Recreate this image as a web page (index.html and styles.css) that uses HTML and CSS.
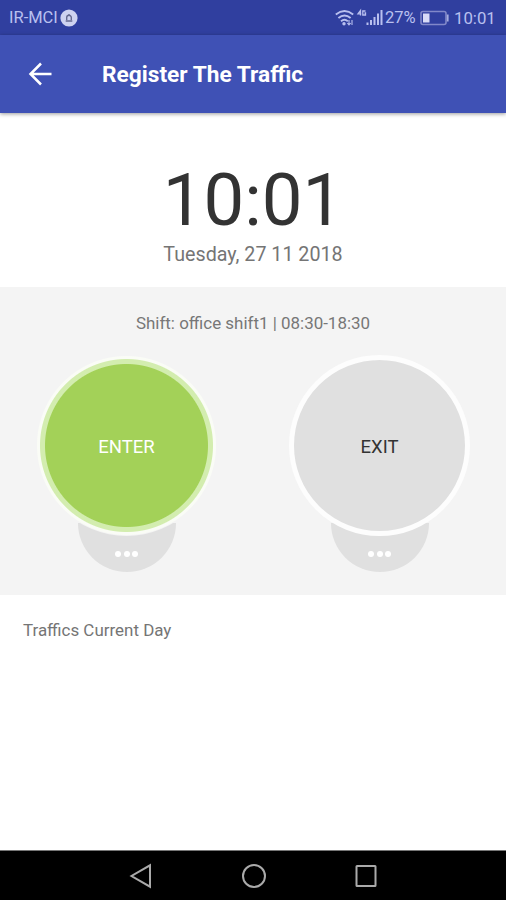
FILE: index.html
```html
<!DOCTYPE html>
<html lang="en">
<head>
<meta charset="utf-8">
<title>Register The Traffic</title>
<link rel="stylesheet" href="styles.css">
</head>
<body>
<header class="status">
  <span class="carrier">IR-MCI</span>
  <svg class="badge" width="18" height="18" viewBox="0 0 18 18"><circle cx="9" cy="9" r="8.6" fill="#ced2f0"/><path d="M5.7 12h6.6M6.7 11V8.6a2.3 2.3 0 0 1 4.6 0V11M9 6.2V5" fill="none" stroke="#65698f" stroke-width="1.4"/></svg>
  <svg class="signals" width="49" height="20" viewBox="0 0 49 20">
    <g fill="none" stroke="#b9c0ef" stroke-width="1.900"><path d="M.8 6.500Q9.500-.4 18.200 6.500M3.400 10Q9.500 4.800 15.600 10M6 13.200Q9.500 10.400 12.800 13.200"/></g>
    <circle cx="9" cy="15.700" r="1.700" fill="#b9c0ef"/><path d="M14 12v5M12.300 15l1.700 2 1.700-2M17 17v-5" stroke="#b9c0ef" stroke-width="1.100" fill="none"/>
    <path d="M25.500 7.500V2.500l-2.500 3.300h3.300M30.500 3h-2.700v4h2.700V5h-1" fill="none" stroke="#b9c0ef" stroke-width="1.300"/>
    <path d="M31.500 14.500h2V17h-2zM35 12h2v5h-2zM38.500 9h2v8h-2zM42 5.500h2V17h-2zM45.500 2h2v15h-2z" fill="#b9c0ef"/>
  </svg>
  <span class="percent">27%</span>
  <svg class="battery" width="29" height="16" viewBox="0 0 29 16"><rect x="1" y="1.500" width="25" height="13" rx="2" fill="none" stroke="#8188c9" stroke-width="1.600"/><path d="M3 3.500h6.500v9H3z" fill="#d8dbf7"/><path d="M27.700 4.500v7" stroke="#a6addf" stroke-width="1.800"/></svg>
  <span class="clock">10:01</span>
</header>
<nav class="bar">
  <svg class="back" width="24" height="24" viewBox="0 0 24 24"><path d="M13 1.500 2.500 12 13 22.500M2.500 12H23.500" fill="none" stroke="#fff" stroke-width="2.500"/></svg>
  <h1 class="title">Register The Traffic</h1>
</nav>
<main>
  <section class="now">
    <div class="time">10:01</div>
    <div class="date">Tuesday, 27 11 2018</div>
  </section>
  <section class="panel">
    <p class="shift">Shift: office shift1 | 08:30-18:30</p>
    <div class="actions">
      <div class="action">
        <div class="round enter">ENTER</div>
        <div class="more"><i></i><i></i><i></i></div>
      </div>
      <div class="action">
        <div class="round exit">EXIT</div>
        <div class="more"><i></i><i></i><i></i></div>
      </div>
    </div>
  </section>
  <h2 class="current">Traffics Current Day</h2>
</main>
<footer class="keys">
  <svg width="24" height="26" viewBox="0 0 24 26"><path d="M21 2.300v21.400L2.500 13z"/></svg>
  <svg width="26" height="26" viewBox="0 0 26 26"><circle cx="13" cy="13" r="11"/></svg>
  <svg width="24" height="26" viewBox="0 0 24 26"><rect x="2.500" y="3" width="19" height="20" rx=".5"/></svg>
</footer>
</body>
</html>
```
FILE: styles.css
```css
* { box-sizing: border-box; }
body {
  margin: 0;
  height: 900px;
  display: flex;
  flex-direction: column;
  overflow: hidden;
  background: #fff;
  font-family: Roboto, sans-serif;
  white-space: nowrap;
}
.status {
  height: 35px;
  flex: none;
  display: flex;
  align-items: center;
  padding-left: 9px;
  background: #303f9f;
  color: #b9c0ef;
  font-size: 17px;
}
.carrier { width: 51px; font-size: 16.5px; }
.badge { flex: none; }
.signals { flex: none; margin-left: 257px; }
.percent { width: 36px; padding-left: 1px; font-size: 16.5px; }
.battery { flex: none; }
.clock { margin-left: 5px; font-size: 16.8px; }
.bar {
  height: 78px;
  flex: none;
  display: flex;
  align-items: center;
  padding-left: 28px;
  background: #3f51b5;
  box-shadow: 0 1px 4px rgba(0, 0, 0, .4);
  color: #fff;
  position: relative;
}
.title { margin: 0 0 0 50px; font-size: 22.7px; font-weight: 700; }
main { flex: 1; }
.now { height: 174px; padding-top: 45px; text-align: center; color: #333; }
.time { font-size: 72.5px; line-height: 86px; }
.date { font-size: 19.7px; line-height: 24px; margin-top: -1px; color: #757575; }
.panel { height: 308px; padding-top: 25px; background: #f4f4f4; }
.shift { margin: 0; text-align: center; font-size: 16.95px; line-height: 22px; color: #777; }
.actions { display: flex; margin-top: 21px; }
.action { width: 253px; display: flex; flex-direction: column; align-items: center; }
.round {
  width: 181px;
  height: 181px;
  border-radius: 50%;
  display: flex;
  align-items: center;
  justify-content: center;
  font-size: 18.5px;
  padding-top: 2px;
  position: relative;
  z-index: 1;
}
.enter {
  background: radial-gradient(circle, #a3d158 81px, #d3edaf 82px, #d3edaf 86px, #fafcf6 87px, #fafcf6 89px, #f4f4f4 90px);
  color: #fff;
}
.exit { background: #e0e0e0; border: 5px solid #fdfdfd; color: #333; }
.more {
  width: 98px;
  height: 49px;
  margin-top: -13px;
  padding-top: 12px;
  border-radius: 0 0 49px 49px;
  background: #e0e0e0;
  display: flex;
  justify-content: center;
  align-items: center;
  gap: 2.5px;
}
.more i { width: 6px; height: 6px; border-radius: 50%; background: #fff; }
.current { margin: 24px 0 0 23px; font-size: 16.95px; line-height: 22px; font-weight: 400; color: #757575; }
.keys {
  height: 50px;
  flex: none;
  display: flex;
  align-items: center;
  justify-content: space-between;
  padding: 0 128px 0 129px;
  border-top: 1px solid #777;
  background: #000;
}
.keys svg { fill: none; stroke: #aaa; stroke-width: 2; }
```
